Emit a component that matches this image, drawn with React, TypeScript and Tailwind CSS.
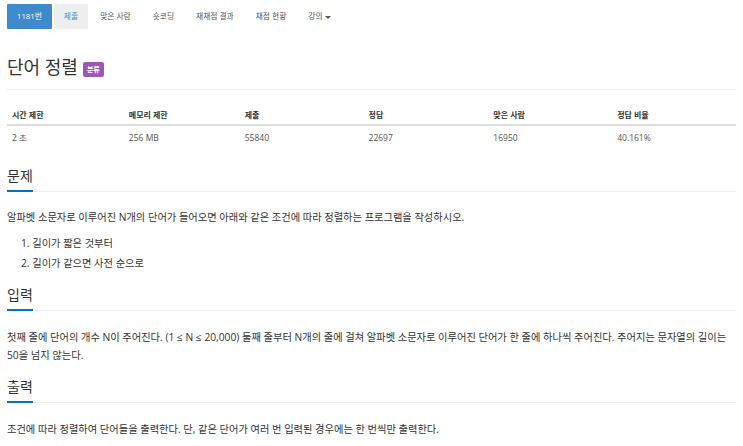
import React from "react";

const font = { fontFamily: '"Open Sans", "Noto Sans CJK KR", sans-serif' };

function Heading({ children }: { children: React.ReactNode }) {
  return (
    <div className="border-b border-[#eee] flex">
      <span className="border-b-2 border-[#0076c0] -mb-px pb-[3px] text-[14px] leading-[22px] text-[#333]">
        {children}
      </span>
    </div>
  );
}

export default function App() {
  const tabs = ["맞은 사람", "숏코딩", "재채점 결과", "채점 현황"];
  const cols = [
    { w: "w-[117px]", h: "시간 제한", v: "2 초" },
    { w: "w-[116px]", h: "메모리 제한", v: "256 MB" },
    { w: "w-[124px]", h: "제출", v: "55840" },
    { w: "w-[125px]", h: "정답", v: "22697" },
    { w: "w-[124px]", h: "맞은 사람", v: "16950" },
    { w: "w-[124px]", h: "정답 비율", v: "40.161%" },
  ];
  return (
    <div className="w-[743px] h-[446px] overflow-hidden bg-white px-[7px]" style={font}>
      {/* nav */}
      <div className="flex gap-[2px] pt-[4px] text-[7.75px] leading-[25px]">
        <div className="bg-[#3e8acc] text-white px-[10px] h-[25px] rounded-[1px]">1181번</div>
        <div className="bg-[#eee] text-[#428bca] px-[10px] h-[25px]">제출</div>
        {tabs.map((t) => (
          <div key={t} className="text-[#555] px-[10px] h-[25px]">{t}</div>
        ))}
        <div className="text-[#555] px-[10px] h-[25px] flex items-center gap-[2px]">
          강의
          <span className="inline-block w-0 h-0 border-l-[3px] border-r-[3px] border-t-[3px] border-l-transparent border-r-transparent border-t-[#555] mt-[1px]" />
        </div>
      </div>

      {/* title */}
      <div className="mt-[25px] border-b border-[#eee] pb-[8px] flex items-center">
        <span className="text-[18px] leading-[27px] text-[#333]">단어 정렬</span>
        <span className="ml-[5px] mt-[3px] bg-[#9b59b6] text-white text-[7px] font-bold px-[4px] leading-[15px] h-[15px] rounded-[2px]">분류</span>
      </div>

      {/* table */}
      <div className="mt-[15px]">
        <div className="flex border-b-2 border-[#ddd] h-[21px] items-center text-[8px]">
          {cols.map((c) => (
            <div key={c.h} className={`${c.w} px-[5px] font-bold text-[#333]`}>{c.h}</div>
          ))}
        </div>
        <div className="flex h-[24px] items-center text-[8.5px]">
          {cols.map((c) => (
            <div key={c.h} className={`${c.w} px-[5px] text-[#555]`}>{c.v}</div>
          ))}
        </div>
      </div>

      <div className="mt-[15px]">
        <Heading>문제</Heading>
      </div>
      <div className="text-[10.25px] leading-[18px] text-[#333] mt-[16px]">
        알파벳 소문자로 이루어진 N개의 단어가 들어오면 아래와 같은 조건에 따라 정렬하는 프로그램을 작성하시오.
      </div>
      <ol className="text-[10.25px] leading-[20px] text-[#333] mt-[7px] pl-[14px]">
        <li>1. 길이가 짧은 것부터</li>
        <li>2. 길이가 같으면 사전 순으로</li>
      </ol>

      <div className="mt-[11px]">
        <Heading>입력</Heading>
      </div>
      <div className="text-[10.25px] leading-[18px] text-[#333] mt-[17px]">
        첫째 줄에 단어의 개수 N이 주어진다. (1 ≤ N ≤ 20,000) 둘째 줄부터 N개의 줄에 걸쳐 알파벳 소문자로 이루어진 단어가 한 줄에 하나씩 주어진다. 주어지는 문자열의 길이는 50을 넘지 않는다.
      </div>

      <div className="mt-[12px]">
        <Heading>출력</Heading>
      </div>
      <div className="text-[10.25px] leading-[18px] text-[#333] mt-[17px]">
        조건에 따라 정렬하여 단어들을 출력한다. 단, 같은 단어가 여러 번 입력된 경우에는 한 번씩만 출력한다.
      </div>
    </div>
  );
}
